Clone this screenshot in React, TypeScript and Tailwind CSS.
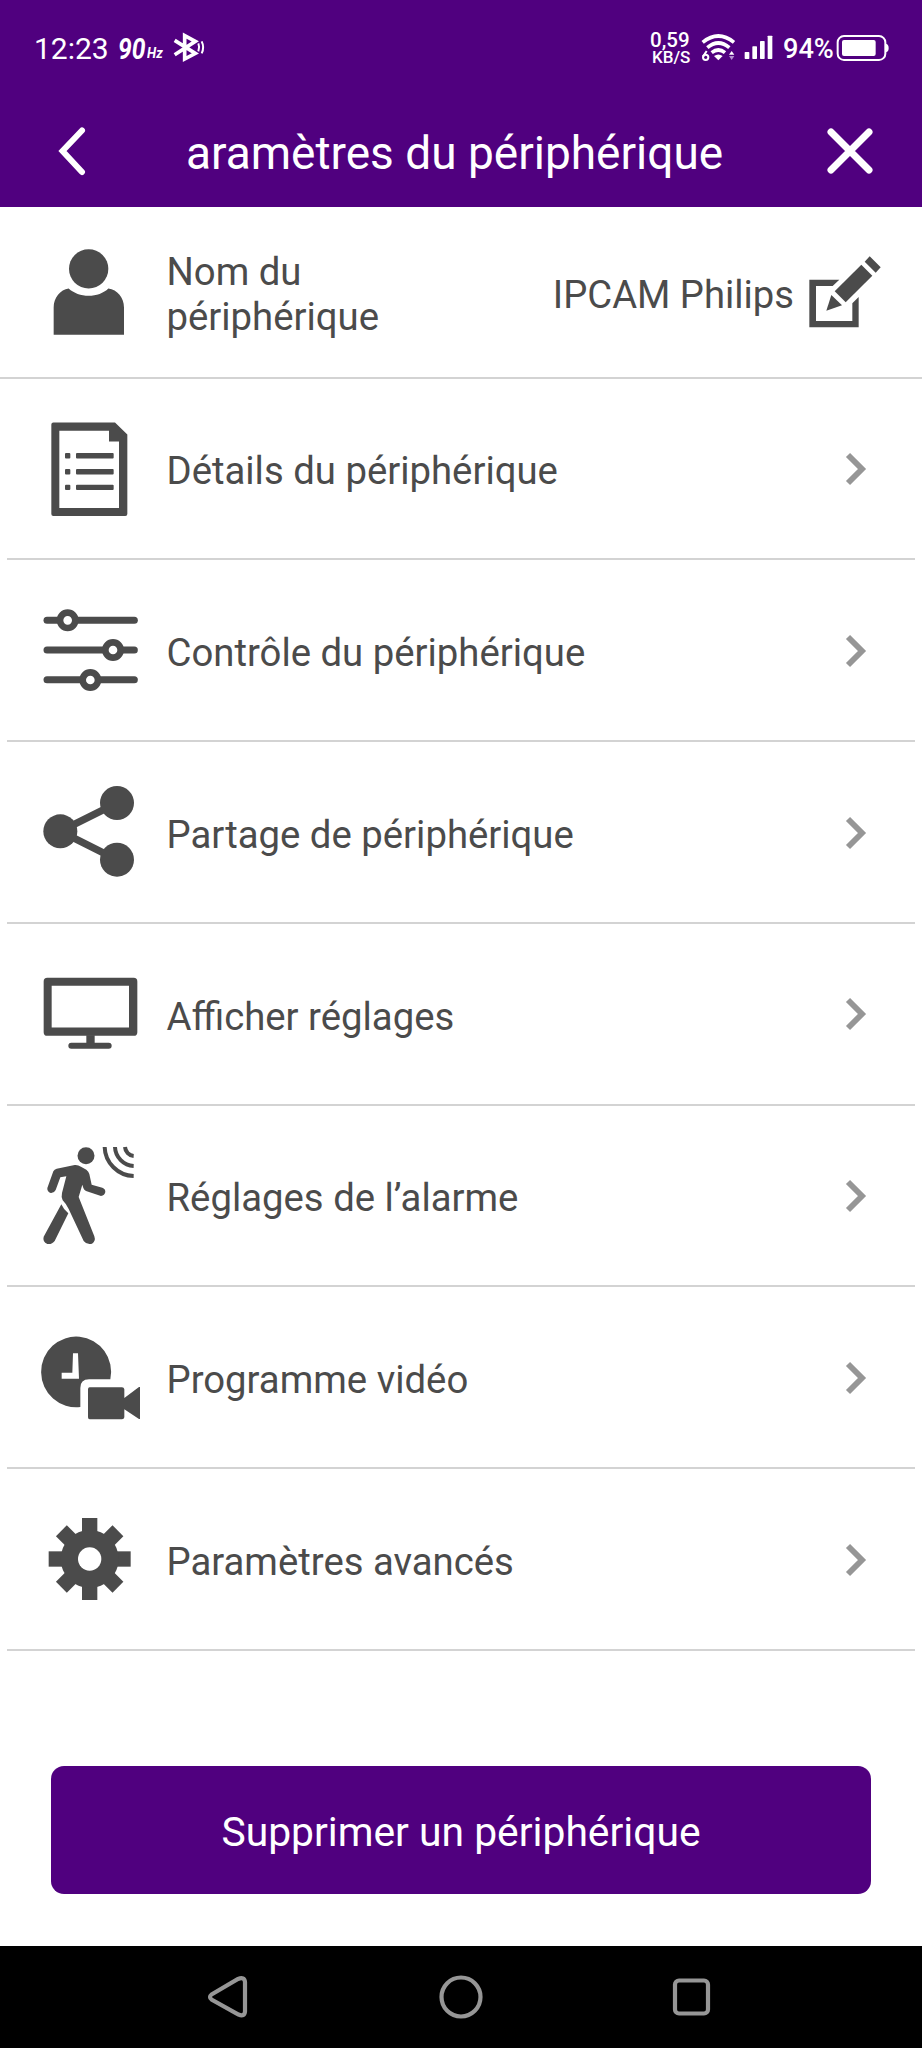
import React from "react";

type IconProps = { viewBox: string; children: React.ReactNode };

function RowIcon({ viewBox, children }: IconProps) {
  return (
    <svg viewBox={viewBox} className="mt-px h-[110px] w-[105px] shrink-0" fill="#4b4b4b" stroke="none">
      {children}
    </svg>
  );
}

const UserIcon = () => (
  <RowIcon viewBox="120 50.5 315 330">
    <circle cx="266" cy="146" r="59" />
    <path d="M161 344 V262 C161 232 181 209 206 205 C221 219 243 227 266 227 C289 227 311 219 325 205 C352 209 372 232 372 262 V344 Z" />
  </RowIcon>
);

const DetailsIcon = () => (
  <RowIcon viewBox="120 580.8 315 330">
    <path
      fillRule="evenodd"
      d="M160 606 H345 L382 642 V881 Q382 887 376 887 H160 Q154 887 154 881 V612 Q154 606 160 606 Z M178 631 V863 H357 V663 H327 V631 Z"
    />
    <rect x="195" y="698" width="16" height="16" rx="3" />
    <rect x="195" y="746" width="16" height="16" rx="3" />
    <rect x="195" y="793" width="16" height="16" rx="3" />
    <rect x="228" y="698" width="113" height="16" rx="3" />
    <rect x="228" y="746" width="113" height="16" rx="3" />
    <rect x="228" y="793" width="113" height="16" rx="3" />
  </RowIcon>
);

const ControlIcon = () => (
  <RowIcon viewBox="120 48 315 330">
    <g stroke="#4b4b4b" strokeWidth="21" strokeLinecap="round">
      <path d="M141 121 H403" />
      <path d="M141 210 H403" />
      <path d="M141 299 H403" />
    </g>
    <g fill="#fff" stroke="#4b4b4b" strokeWidth="20">
      <circle cx="203" cy="121" r="23" />
      <circle cx="339" cy="210" r="23" />
      <circle cx="271" cy="300" r="23" />
    </g>
  </RowIcon>
);

const ShareIcon = () => (
  <RowIcon viewBox="120 593 315 330">
    <path d="M351 668 L181 753 L351 838" fill="none" stroke="#4b4b4b" strokeWidth="22" />
    <circle cx="351" cy="668" r="51" />
    <circle cx="181" cy="753" r="51" />
    <circle cx="351" cy="838" r="51" />
  </RowIcon>
);

const MonitorIcon = () => (
  <RowIcon viewBox="120 56.5 315 330">
    <path
      fillRule="evenodd"
      d="M142 113 H401 Q412 113 412 124 V276 Q412 287 401 287 H142 Q131 287 131 276 V124 Q131 113 142 113 Z M155 137 V262 H387 V137 Z"
    />
    <rect x="259" y="285" width="25" height="28" />
    <rect x="205" y="308" width="130" height="18" rx="9" />
  </RowIcon>
);

const AlarmIcon = () => (
  <RowIcon viewBox="120 602 315 330">
    <circle cx="258" cy="646" r="25.5" />
    <path d="M160 693 Q163 687 170 685 L224 674 Q234 673 243 679 L259 688 Q266 693 268 701 L275 733 L307 742 Q316 745 316 755 Q314 766 303 767 L258 752 Q252 749 250 743 L247 733 Q242 750 236 770 L283 888 Q288 903 276 910 Q260 914 251 902 L206 806 Q199 791 188 780 Q183 771 186 758 L199 708 L181 711 L167 749 Q162 759 152 758 Q141 754 142 743 Z" />
    <path d="M184 792 Q191 808 205 819 L164 902 Q156 913 142 911 Q127 904 131 889 Z" />
    <g fill="none" stroke="#4b4b4b" strokeWidth="12">
      <path d="M314 620 C315 667 354 706 401 707" />
      <path d="M345 620 C346 650 371 676 401 677" />
      <path d="M375 620 C376 634 387 646 401 647" />
    </g>
  </RowIcon>
);

const ScheduleIcon = () => (
  <RowIcon viewBox="120 67 315 330">
    <path d="M331 236 A105 106 0 1 0 241 319 V262 Q241 236 267 236 Z" />
    <path d="M219 158 H234 L237 234 H185 V216 H217 Z" fill="#fff" />
    <path d="M269 260 H366 Q372 260 373 266 V292 L417 259 H420 V355 H417 L373 326 V350 Q372 356 366 356 H269 Q264 356 264 350 V266 Q264 260 269 260 Z" />
  </RowIcon>
);

const GearIcon = () => (
  <RowIcon viewBox="120 614 315 330">
    <g transform="translate(269 776)">
      <rect x="-23" y="-123" width="46" height="246" />
      <rect x="-123" y="-23" width="246" height="46" />
      <rect x="-23" y="-120" width="46" height="240" transform="rotate(45)" />
      <rect x="-23" y="-120" width="46" height="240" transform="rotate(-45)" />
      <circle r="87" />
      <circle r="35" fill="#fff" />
    </g>
  </RowIcon>
);

const EditIcon = () => (
  <svg viewBox="1040 105 222 222" className="h-[74px] w-[74px] shrink-0" fill="#4b4b4b">
    <path d="M1134 179 L1114 198 H1064 V303 H1173 V250 L1192 231 V322 H1044 V179 Z" />
    <path d="M1200 134 L1233 167 L1153 247 L1120 214 Z" />
    <path d="M1225 109 L1258 142 L1243 158 L1210 125 Z" />
    <path d="M1110 225 L1142 256 L1095 272 Z" />
  </svg>
);

const Chevron = () => (
  <svg viewBox="0 0 24 36" className="mt-px mr-[47px] ml-auto h-9 w-6 shrink-0" fill="none" stroke="#969696" strokeWidth="5.8">
    <path d="M4 4 L18 18 L4 32" />
  </svg>
);

const rows = [
  { label: "Détails du périphérique", Icon: DetailsIcon },
  { label: "Contrôle du périphérique", Icon: ControlIcon },
  { label: "Partage de périphérique", Icon: ShareIcon },
  { label: "Afficher réglages", Icon: MonitorIcon },
  { label: "Réglages de l’alarme", Icon: AlarmIcon },
  { label: "Programme vidéo", Icon: ScheduleIcon },
  { label: "Paramètres avancés", Icon: GearIcon },
];

function StatusBar() {
  return (
    <div className="flex h-[98px] items-center pl-[34px] leading-none">
      <span className="w-[84px] text-[30px]">12:23</span>
      <span className="w-[29px]">
        <span className="inline-block origin-left scale-x-[0.85] text-[29px] font-bold italic">90</span>
      </span>
      <span className="w-[24px] pt-[9px]">
        <span className="inline-block origin-left scale-x-[0.86] text-[15.500px] font-bold italic">Hz</span>
      </span>
      <svg viewBox="510 93 108 108" className="h-9 w-9" fill="none" stroke="#fff" strokeWidth="11">
        <path d="M521 121 L583 160 L551 177 V107 L583 124 L521 164" />
        <path d="M592 130 Q597 142 592 154" strokeWidth="6" />
        <path d="M602 124 Q611 142 602 160" strokeWidth="6" />
      </svg>
      <div className="ml-auto flex w-[51px] flex-col pb-[3px] font-medium">
        <span className="text-[20.500px] leading-[16px] [text-box:trim-both_cap_alphabetic]">0,59</span>
        <span className="mt-[4px] pl-[2px] text-[17px] leading-[18px] [text-box:trim-both_cap_alphabetic]">KB/S</span>
      </div>
      <svg viewBox="718 93 222 108" className="h-9 w-[74px]" fill="none" stroke="#fff">
        <path d="M723 127 Q770 89 817 127" strokeWidth="11" />
        <path d="M737 143 Q770 115 803 143" strokeWidth="11" />
        <path d="M750 158 Q770 142 790 158" strokeWidth="11" />
        <path d="M757 168 Q770 159 783 168 L770 181 Z" fill="#fff" stroke="none" />
        <circle cx="732" cy="172" r="8" strokeWidth="6" />
        <path d="M724 170 L735 153" strokeWidth="6" />
        <path d="M802 164 L810 153 L818 164 Z" fill="#fff" stroke="none" />
        <path d="M802 168 L810 180 L818 168 Z" fill="#b48fd0" stroke="none" />
        <g fill="#fff" stroke="none">
          <rect x="849" y="156" width="14" height="21" rx="2" />
          <rect x="872" y="139" width="14" height="38" rx="2" />
          <rect x="895" y="123" width="14" height="54" rx="2" />
          <rect x="918" y="107" width="14" height="70" rx="2" />
        </g>
      </svg>
      <span className="ml-[8px] w-[53px] text-[28px] font-medium">
        <span className="inline-block origin-left scale-x-[0.97]">94%</span>
      </span>
      <svg viewBox="1126 99 162 90" className="mr-[32px] h-[30px] w-[54px]" fill="none">
        <rect x="1131" y="105" width="143" height="72" rx="19" stroke="#fff" strokeWidth="6" />
        <rect x="1144" y="117" width="101" height="48" rx="6" fill="#fff" />
        <path d="M1276 128 Q1284 130 1284 141 Q1284 152 1276 154 Z" fill="#fff" />
      </svg>
    </div>
  );
}

export default function App() {
  return (
    <div className="flex h-[2048px] w-[922px] flex-col overflow-hidden bg-white font-['Roboto',sans-serif] text-[#4b4b4b]">
      <header className="h-[207px] shrink-0 bg-[#50007f] text-white">
        <StatusBar />
        <div className="flex h-[106px] items-center">
          <svg viewBox="0 0 30 50" className="ml-[57px] h-[50px] w-[30px]" fill="none" stroke="#fff" strokeWidth="6">
            <path d="M25 4.500 L5.500 25 L25 46" strokeLinecap="round" />
          </svg>
          <h1 className="ml-[99px] pt-1 text-[46px] leading-none whitespace-nowrap">aramètres du périphérique</h1>
          <svg viewBox="0 0 50 50" className="mr-[47px] ml-auto h-[50px] w-[50px]" fill="none" stroke="#fff" strokeWidth="7">
            <path d="M6 6 L44 44 M44 6 L6 44" strokeLinecap="round" />
          </svg>
        </div>
      </header>

      <main className="flex grow flex-col">
        <div className="flex h-[171.700px] items-center border-b-2 border-[#d3d3d3] pl-10">
          <UserIcon />
          <div className="ml-[21.500px] w-[260px] pt-[5px] text-[38.300px] leading-[45px]">Nom du périphérique</div>
          <div className="ml-auto pt-[8px] text-[38.200px]">IPCAM Philips</div>
          <div className="mr-[40px] ml-[14px]">
            <EditIcon />
          </div>
        </div>

        <ul className="flex flex-col">
          {rows.map(({ label, Icon }) => (
            <li key={label} className="mx-[7px] flex h-[181.750px] items-center border-b-2 border-[#d3d3d3] pl-[33px]">
              <Icon />
              <span className="ml-[21.500px] pt-[5px] text-[38.300px] whitespace-nowrap">{label}</span>
              <Chevron />
            </li>
          ))}
        </ul>

        <button className="mx-[51px] mt-[115px] h-[128px] rounded-[13px] bg-[#50007f] pt-[5px] text-[40.800px] text-white">
          Supprimer un périphérique
        </button>
      </main>

      <nav className="flex h-[102px] shrink-0 items-center justify-center bg-black">
        <svg viewBox="0 0 510 50" className="h-[50px] w-[510px]" fill="none" stroke="#969696" strokeWidth="4.200">
          <path d="M5.500 22.500 L32 7 Q38.500 4.500 39 10 V39.500 Q38.500 45 32.500 42.500 L5.500 27.500 Q2.500 25 5.500 22.500 Z" />
          <circle cx="255" cy="25" r="19.500" />
          <rect x="469" y="8.500" width="33" height="33" rx="4" />
        </svg>
      </nav>
    </div>
  );
}
